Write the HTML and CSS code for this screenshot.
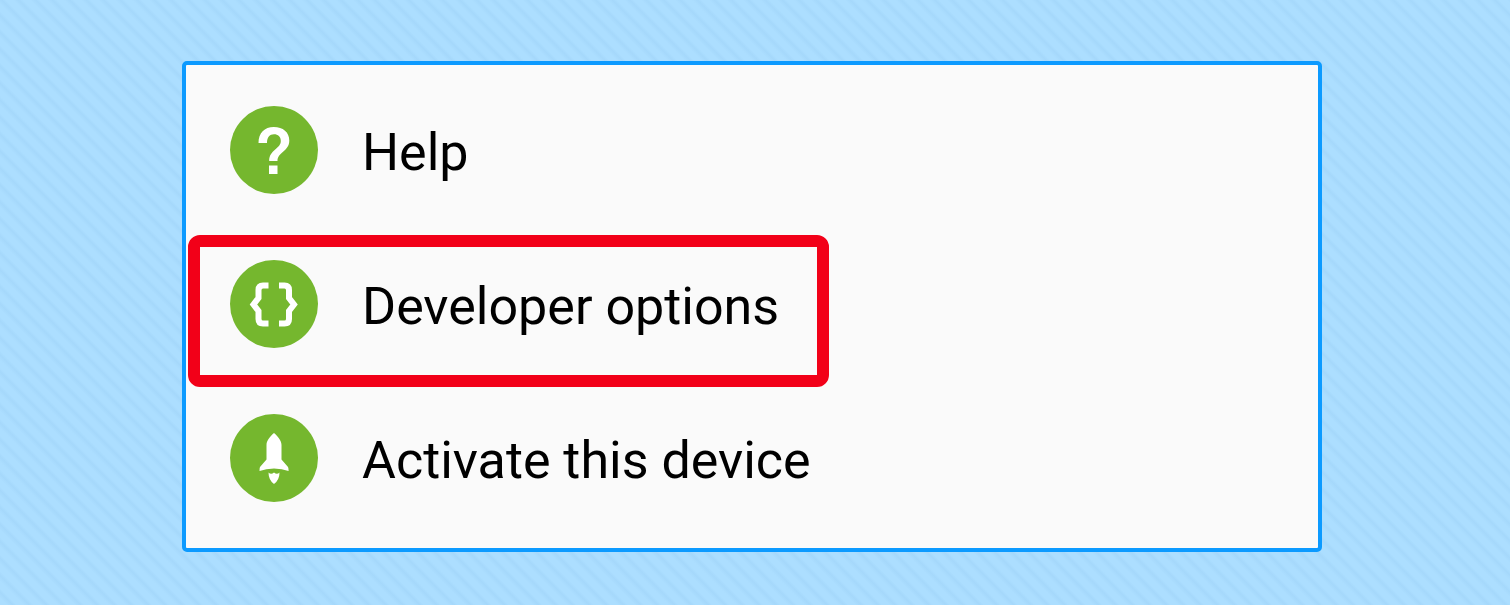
FILE: index.html
```html
<!DOCTYPE html>
<html lang="en">
<head>
<meta charset="utf-8">
<meta name="viewport" content="width=device-width, initial-scale=1">
<title>Settings menu</title>
<link rel="stylesheet" href="styles.css">
</head>
<body>
<main class="panel">
  <ul class="menu">
    <li class="row">
      <button class="item" type="button">
        <svg class="icon" viewBox="0 0 88 88" aria-hidden="true">
          <circle class="disc" cx="44" cy="44" r="44"/>
          <path class="glyph" d="M28.500 37C28.500 27 34.500 21 43.800 21C53 21 59.300 26.300 59.300 34.500C59.300 45.500 47.500 46 47.500 55H39.200C39.200 43.500 50.800 43 50.800 35C50.800 30.500 48 28.200 44 28.200C39.500 28.200 37 31.500 37 37zM39 59.500h8.500V68H39z"/>
        </svg>
        <span>Help</span>
      </button>
    </li>
    <li class="row">
      <button class="item highlighted" type="button">
        <svg class="icon" viewBox="0 0 88 88" aria-hidden="true">
          <circle class="disc" cx="44" cy="44" r="44"/>
          <path class="brace" d="M38.500 25.500h-5.500q-4.500 0-4.500 4.500v8l-5 6.500 5 6.500v8q0 4.500 4.500 4.500h5.500M49 25.500h5.500q4.500 0 4.500 4.500v8l5 6.500-5 6.500v8q0 4.500-4.500 4.500H49"/>
        </svg>
        <span>Developer options</span>
      </button>
    </li>
    <li class="row">
      <button class="item" type="button">
        <svg class="icon" viewBox="0 0 88 88" aria-hidden="true">
          <circle class="disc" cx="44" cy="44" r="44"/>
          <path class="glyph" d="M44 19C48 22.500 51.500 26.500 51.500 31V45.500L58 53Q58.600 54 58.600 57Q52 54.500 44 54.500T29.500 57Q29.500 54 30 53L36.500 45.500V31C36.500 26.500 40 22.500 44 19zM38.500 58.500Q41 61 44 58.500Q47 61 49.500 58.500Q49.500 66 44 70Q38.500 66 38.500 58.500z"/>
        </svg>
        <span>Activate this device</span>
      </button>
    </li>
  </ul>
</main>
</body>
</html>
```
FILE: styles.css
```css
* {
  box-sizing: border-box;
}

body {
  margin: 0;
  min-height: 100vh;
  padding: 61px 188px 53px 182px;
  background: repeating-linear-gradient(45deg, #acdeff 0, #acdeff 5px, #a5d8fb 9px, #acdeff 12px);
  font-family: Roboto, sans-serif;
}

.panel {
  padding: 8px 0 13px;
  border: 4px solid #0c9aff;
  border-radius: 5px;
  background: #fafafa;
}

.menu {
  margin: 0;
  padding: 0;
  list-style: none;
}

.item {
  position: relative;
  display: flex;
  align-items: center;
  gap: 44px;
  height: 154px;
  padding: 0 50px 0 44px;
  border: 0;
  background: none;
  color: #000;
  font: 400 52px/64px Roboto, sans-serif;
  text-align: left;
  white-space: nowrap;
}

.item span {
  padding-top: 6px;
}

.highlighted::after {
  content: "";
  position: absolute;
  inset: 8px 0 -6px 2px;
  border: 12px solid #f20018;
  border-radius: 12px;
}

.icon {
  flex: none;
  width: 88px;
  height: 88px;
}

.disc {
  fill: #75b72e;
}

.glyph {
  fill: #fff;
}

.brace {
  fill: none;
  stroke: #fff;
  stroke-width: 6;
}
```
